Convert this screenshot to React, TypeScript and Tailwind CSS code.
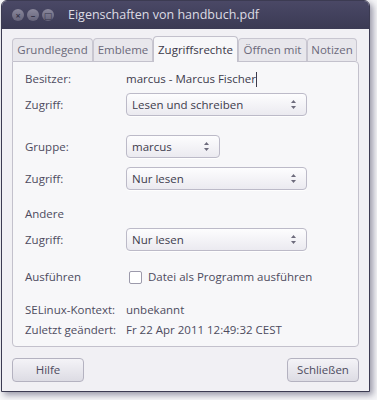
import React from 'react';

const font = { fontFamily: '"Open Sans", "DejaVu Sans", sans-serif' };

function Arrows() {
  return (
    <svg width="7" height="11" viewBox="0 0 7 11" className="ml-auto">
      <path d="M3.5 1 L6 4 L1 4 Z" fill="#6d6b7c" />
      <path d="M3.5 10 L6 7 L1 7 Z" fill="#6d6b7c" />
    </svg>
  );
}

function Combo({ value, w }: { value: string; w: string }) {
  return (
    <div className={`${w} h-[23px] flex items-center pl-[5px] pr-[9px] rounded-[4px] border border-[#bcbac8] bg-gradient-to-b from-[#fdfdfe] to-[#ebeaf0] text-[#3d3b4c] shadow-[0_1px_0_rgba(255,255,255,0.8)]`}>
      <span>{value}</span>
      <Arrows />
    </div>
  );
}

function Row({ label, mt, h, children }: { label: string; mt: string; h: string; children?: React.ReactNode }) {
  return (
    <div className={`flex items-center ${mt} ${h}`}>
      <div className="w-[101px] text-[#4d4b5e]">{label}</div>
      {children}
    </div>
  );
}

function Tab({ label, active, w }: { label: string; active?: boolean; w: string }) {
  return active ? (
    <div className={`${w} h-[26px] -mb-px border border-b-0 border-[#c3c1cc] rounded-t-[4px] bg-[#f7f7f9] flex items-center justify-center text-[#3a3848] relative z-10`}>{label}</div>
  ) : (
    <div className={`${w} h-[23px] border border-b-0 border-[#c8c6d0] rounded-t-[4px] bg-[#e8e7ec] flex items-center justify-center text-[#6b697a]`}>{label}</div>
  );
}

export default function App() {
  return (
    <div className="w-[377px] h-[400px] bg-[#f6f6f8] pl-[1px] text-[11.5px]" style={font}>
      <div className="w-[369px] h-[392px] flex flex-col rounded-t-[6px] overflow-hidden border border-[#3c3b52] bg-[#f1f0f4] shadow-[3px_3px_6px_rgba(40,38,70,0.45)]">
        <div className="h-[28px] shrink-0 flex items-center pl-[10px] bg-gradient-to-b from-[#4a4866] to-[#3b3a54]">
          <div className="flex gap-[3px]">
            {['×', '–', '□'].map((s, i) => (
              <div key={i} className="w-[12px] h-[12px] rounded-full bg-gradient-to-b from-[#8a889c] to-[#66647a] flex items-center justify-center text-[#36354a] text-[9px] leading-none font-bold">{s}</div>
            ))}
          </div>
          <div className="ml-[14px] text-[12.5px] text-[#dddce4]">Eigenschaften von handbuch.pdf</div>
        </div>
        <div className="px-[10px] pt-[6px] flex flex-col flex-1">
          <div className="flex items-end h-[26px]">
            <Tab label="Grundlegend" w="w-[81px]" />
            <Tab label="Embleme" w="w-[60px]" />
            <Tab label="Zugriffsrechte" w="w-[85px]" active />
            <Tab label="Öffnen mit" w="w-[69px]" />
            <Tab label="Notizen" w="w-[50px]" />
          </div>
          <div className="h-[286px] border border-[#c3c1cc] rounded-b-[4px] rounded-tr-[4px] bg-[#f7f7f9] pl-[12px]">
            <Row label="Besitzer:" mt="mt-[7px]" h="h-[20px]">
              <span className="text-[#3d3b4c]">marcus - Marcus Fischer</span>
              <span className="w-px h-[15px] bg-[#3d3b4c]" />
            </Row>
            <Row label="Zugriff:" mt="mt-[4px]" h="h-[23px]"><Combo value="Lesen und schreiben" w="w-[181px]" /></Row>
            <Row label="Gruppe:" mt="mt-[19px]" h="h-[23px]"><Combo value="marcus" w="w-[94px]" /></Row>
            <Row label="Zugriff:" mt="mt-[9px]" h="h-[23px]"><Combo value="Nur lesen" w="w-[181px]" /></Row>
            <Row label="Andere" mt="mt-[14px]" h="h-[20px]" />
            <Row label="Zugriff:" mt="mt-[4px]" h="h-[23px]"><Combo value="Nur lesen" w="w-[181px]" /></Row>
            <Row label="Ausführen" mt="mt-[16px]" h="h-[20px]">
              <div className="ml-[3px] w-[13px] h-[13px] rounded-[2px] border border-[#9c9aab] bg-white" />
              <span className="ml-[6px] text-[#4d4b5e]">Datei als Programm ausführen</span>
            </Row>
            <Row label="SELinux-Kontext:" mt="mt-[13px]" h="h-[20px]"><span className="text-[#4d4b5e]">unbekannt</span></Row>
            <Row label="Zuletzt geändert:" mt="mt-0" h="h-[20px]"><span className="text-[#4d4b5e]">Fr 22 Apr 2011 12:49:32 CEST</span></Row>
          </div>
          <div className="mt-[11px] flex justify-between">
            {['Hilfe', 'Schließen'].map(b => (
              <div key={b} className="w-[72px] h-[24px] rounded-[4px] border border-[#b4b2c0] bg-gradient-to-b from-[#f4f3f7] to-[#dddce4] flex items-center justify-center text-[#4d4b5e]">{b}</div>
            ))}
          </div>
        </div>
      </div>
    </div>
  );
}
